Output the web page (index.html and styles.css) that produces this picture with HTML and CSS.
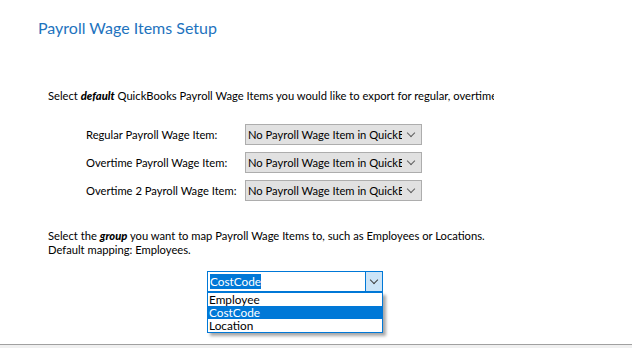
FILE: index.html
```html
<!DOCTYPE html>
<html lang="en">
<head>
    <meta charset="UTF-8">
    <title>Payroll Wage Items Setup</title>
    <link rel="stylesheet" href="styles.css">
</head>
<body>
    <div class="page">
        <h1 class="title">Payroll Wage Items Setup</h1>

        <p class="intro">Select <b><i>default</i></b> QuickBooks Payroll Wage Items you would like to export for regular, overtime and double time hours.</p>

        <div class="rows">
            <div class="row">
                <span class="label">Regular Payroll Wage Item:</span>
                <div class="select"><span class="value">No Payroll Wage Item in QuickBooks</span><span class="chev"></span></div>
            </div>
            <div class="row">
                <span class="label">Overtime Payroll Wage Item:</span>
                <div class="select"><span class="value">No Payroll Wage Item in QuickBooks</span><span class="chev"></span></div>
            </div>
            <div class="row">
                <span class="label">Overtime 2 Payroll Wage Item:</span>
                <div class="select"><span class="value">No Payroll Wage Item in QuickBooks</span><span class="chev"></span></div>
            </div>
        </div>

        <p class="group-text">Select the <b><i>group</i></b> you want to map Payroll Wage Items to, such as Employees or Locations.<br>Default mapping: Employees.</p>

        <div class="combo-wrap">
            <div class="combo">
                <span class="combo-value"><span class="sel">CostCode</span></span>
                <span class="combo-btn"><span class="chev"></span></span>
            </div>
            <ul class="dropdown">
                <li>Employee</li>
                <li class="active">CostCode</li>
                <li>Location</li>
            </ul>
        </div>
    </div>
    <div class="footer"></div>
</body>
</html>
```

FILE: styles.css
```css
body {
    margin: 0;
    height: 348px;
    display: flex;
    flex-direction: column;
    background-color: #fff;
    font-family: Lato, 'Liberation Sans', sans-serif;
    font-size: 11.2px;
    color: #000;
    overflow: hidden;
}
.page {
    flex: 1;
    padding-top: 18px;
}
.title {
    margin: 0 0 0 38px;
    font-size: 16px;
    font-weight: normal;
    line-height: 20px;
    color: #1e73be;
}
.intro {
    margin: 51px 0 0 48px;
    width: 446px;
    line-height: 14px;
    height: 14px;
    white-space: nowrap;
    overflow: hidden;
}
.intro b, .group-text b {
    font-weight: 900;
}
.rows {
    margin: 21px 0 0 86px;
    display: flex;
    flex-direction: column;
    gap: 7px;
}
.row {
    display: flex;
    align-items: center;
}
.label {
    width: 159px;
    white-space: nowrap;
}
.select {
    width: 173px;
    height: 19px;
    border: 1px solid #adadad;
    background-color: #e1e1e1;
    display: flex;
    align-items: center;
    padding-left: 2px;
}
.value {
    flex: 1;
    overflow: hidden;
    white-space: nowrap;
    width: 0;
}
.chev {
    width: 5px;
    height: 5px;
    border-right: 1px solid #606060;
    border-bottom: 1px solid #606060;
    transform: rotate(45deg);
    margin: -3px 7px 0 6px;
}
.group-text {
    margin: 28px 0 0 48px;
    line-height: 14px;
}
.combo-wrap {
    position: relative;
    margin: 14px 0 0 207px;
    width: 176px;
}
.combo {
    height: 19px;
    border: 1px solid #0078d7;
    display: flex;
    background-color: #fff;
}
.combo-value {
    flex: 1;
    display: flex;
    align-items: center;
    padding-left: 2px;
}
.sel {
    background-color: #0078d7;
    color: #fff;
    line-height: 15px;
    font-size: 11.8px;
}
.combo-btn {
    width: 16px;
    background-color: #cce4f7;
    border-left: 1px solid #0078d7;
    display: flex;
    align-items: center;
    justify-content: center;
}
.combo-btn .chev {
    margin: -3px 0 0 0;
    border-color: #404040;
}
.dropdown {
    position: absolute;
    left: 0;
    top: 21px;
    width: 174px;
    margin: 0;
    padding: 0;
    list-style: none;
    border: 1px solid #0078d7;
    background-color: #fff;
    box-shadow: 3px 3px 3px rgba(0, 0, 0, 0.35);
    font-size: 11.8px;
}
.dropdown li {
    height: 13px;
    line-height: 13px;
    padding-left: 1px;
}
.dropdown li.active {
    background-color: #0078d7;
    color: #fff;
}
.footer {
    height: 3px;
    border-top: 1px solid #a0a0a0;
    background-color: #f0f0f0;
}
```
